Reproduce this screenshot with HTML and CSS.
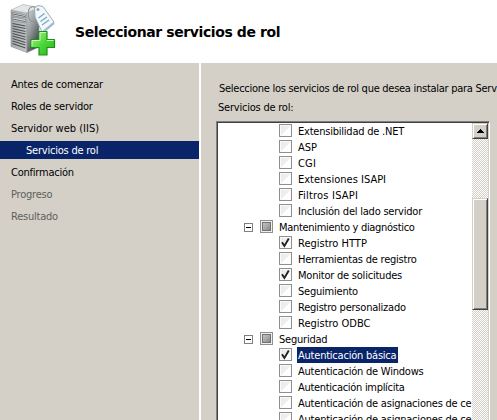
FILE: index.html
```html
<!DOCTYPE html>
<html lang="es">
<head>
<meta charset="utf-8">
<title>Seleccionar servicios de rol</title>
<link rel="stylesheet" href="styles.css">
</head>
<body>
<header class="header">
  <svg class="logo" width="50" height="54" viewBox="0 0 50 54">
    <defs>
      <linearGradient id="front" x1="0" y1="0" x2="1" y2="0"><stop offset="0" stop-color="#a4a8aa"/><stop offset="1" stop-color="#c3c7c8"/></linearGradient>
      <linearGradient id="side" x1="0" y1="0" x2=".6" y2="1"><stop offset="0" stop-color="#d6dadb"/><stop offset=".5" stop-color="#93989a"/><stop offset="1" stop-color="#3d4143"/></linearGradient>
      <linearGradient id="plus" x1="0" y1="0" x2="1" y2="1"><stop offset="0" stop-color="#b5f294"/><stop offset=".5" stop-color="#4fd83b"/><stop offset="1" stop-color="#25b51d"/></linearGradient>
    </defs>
    <path d="M1 7L17 10V49.500L1 43.500Z" fill="url(#front)" stroke="#8b9092" stroke-width=".6"/>
    <path d="M17 10L29 5V44L17 49.500Z" fill="url(#side)" stroke="#8b9092" stroke-width=".6"/>
    <path d="M1 7L13 1.500L29 4.500L17 10Z" fill="#e4e7e7" stroke="#a5aaac" stroke-width=".6"/>
    <path d="M2.500 9.500L15.500 12V15L2.500 12.500ZM2.500 14L15.500 16.500V20L2.500 17.500Z" fill="#dfe2e2" stroke="#6d7275" stroke-width=".6"/>
    <path d="M3 11L15 13.500M3 16L15 18.500" stroke="#55595b" stroke-width=".9"/>
    <path d="M2.500 20.500L15.500 23M2.500 23L15.500 25.500M2.500 25.500L15.500 28.500M2.500 28L15.500 31M2.500 30.500L15.500 34M2.500 33L15.500 36.500M2.500 35.500L15.500 39.500M2.500 38L15.500 42M2.500 40.500L15.500 45" stroke="#4c5154" stroke-width="1.200"/>
    <path d="M28 7C24 1 19 4 18.500 8C18 14 19 18 22.500 19C25 19 27 16 28 13" fill="none" stroke="#8e9598" stroke-width="1.100"/>
    <path d="M24.500 5L28 2.500L33 3.500L44 19L32 29L25 14Z" fill="#f1f7fb" stroke="#8ba7b9" stroke-width=".9"/>
    <path d="M44 19L32 29L33 30.500L44.500 21Z" fill="#9fbacb"/>
    <circle cx="28" cy="6.500" r="1.500" fill="#96a8b3"/>
    <path d="M28.500 15L34.500 10.500M30.500 18.500L37 14M32 22L39 17" stroke="#79a6c5" stroke-width="1.200"/>
    <path d="M29 28.500H37V36.500H44.500V44.500H37V52H29V44.500H21V36.500H29Z" fill="url(#plus)" stroke="#199316" stroke-width="1.200" stroke-linejoin="round"/>
    <path d="M30 37.500V29.500H36M22 43.500V37.500H30M37 37.500H43.500" fill="none" stroke="#caf7b8" stroke-width="1"/>
  </svg>
  <h1 class="title">Seleccionar servicios de rol</h1>
</header>
<div class="body">
  <nav class="steps">
    <div class="step"><span>Antes de comenzar</span></div>
    <div class="step"><span>Roles de servidor</span></div>
    <div class="step wide"><span>Servidor web (IIS)</span></div>
    <div class="step current"><span>Servicios de rol</span></div>
    <div class="step"><span>Confirmación</span></div>
    <div class="step pending"><span>Progreso</span></div>
    <div class="step pending"><span>Resultado</span></div>
  </nav>
  <main class="content">
    <p class="intro">Seleccione los servicios de rol que desea instalar para Serv</p>
    <p class="caption">Servicios de rol:</p>
    <div class="list">
      <div class="tree">
        <div class="row"><i class="box"></i><span class="label">Extensibilidad de .NET</span></div>
        <div class="row"><i class="box"></i><span class="label wide">ASP</span></div>
        <div class="row"><i class="box"></i><span class="label wider">CGI</span></div>
        <div class="row"><i class="box"></i><span class="label wide">Extensiones ISAPI</span></div>
        <div class="row"><i class="box"></i><span class="label wider">Filtros ISAPI</span></div>
        <div class="row"><i class="box"></i><span class="label">Inclusión del lado servidor</span></div>
        <div class="row group"><i class="toggle"></i><i class="box mixed"></i><span class="label tight">Mantenimiento y diagnóstico</span></div>
        <div class="row"><i class="box"><svg class="check" viewBox="0 0 11 11"><path d="M2 5.200L4.400 9L8.800 1.600"/></svg></i><span class="label wide">Registro HTTP</span></div>
        <div class="row"><i class="box"></i><span class="label">Herramientas de registro</span></div>
        <div class="row"><i class="box"><svg class="check" viewBox="0 0 11 11"><path d="M2 5.200L4.400 9L8.800 1.600"/></svg></i><span class="label">Monitor de solicitudes</span></div>
        <div class="row"><i class="box"></i><span class="label">Seguimiento</span></div>
        <div class="row"><i class="box"></i><span class="label">Registro personalizado</span></div>
        <div class="row"><i class="box"></i><span class="label wide">Registro ODBC</span></div>
        <div class="row group"><i class="toggle"></i><i class="box mixed"></i><span class="label">Seguridad</span></div>
        <div class="row"><i class="box"><svg class="check" viewBox="0 0 11 11"><path d="M2 5.200L4.400 9L8.800 1.600"/></svg></i><span class="label selected">Autenticación básica</span></div>
        <div class="row"><i class="box"></i><span class="label">Autenticación de Windows</span></div>
        <div class="row"><i class="box"></i><span class="label tight">Autenticación implícita</span></div>
        <div class="row"><i class="box"></i><span class="label">Autenticación de asignaciones de ce</span></div>
        <div class="row"><i class="box"></i><span class="label">Autenticación de asignaciones de ce</span></div>
      </div>
      <div class="scrollbar">
        <div class="arrow"><svg width="7" height="4" viewBox="0 0 7 4" shape-rendering="crispEdges"><path d="M3 0H4V1H5V2H6V3H7V4H0V3H1V2H2V1H3Z"/></svg></div>
        <div class="thumb"></div>
      </div>
    </div>
  </main>
</div>
</body>
</html>
```
FILE: styles.css
```css
* { box-sizing: border-box; }
body {
  margin: 0;
  width: 497px;
  height: 420px;
  overflow: hidden;
  display: flex;
  flex-direction: column;
  background: #fff;
  color: #000;
  font: 11px/16px "DejaVu Sans Condensed", "DejaVu Sans", sans-serif;
  font-stretch: condensed;
  letter-spacing: -0.22px;
  white-space: nowrap;
}
.header { display: flex; flex: none; height: 63px; padding: 3px 0 0 10px; }
.logo { flex: none; width: 50px; height: 54px; }
.title {
  margin: 18px 0 0 15px;
  font: bold 14px/22px "DejaVu Sans", sans-serif;
  letter-spacing: -0.4px;
}
.body { display: flex; flex: 1; min-height: 0; gap: 2px; }
.steps {
  flex: none;
  width: 199px;
  padding-top: 12px;
  display: flex;
  flex-direction: column;
  gap: 4px;
  background: #d4d0c8;
}
.step { height: 18px; line-height: 20px; padding-left: 11px; }
.current { padding-left: 26px; background: #0a246a; color: #fff; }
.pending { color: #615e59; }
.content {
  flex: 1;
  min-width: 0;
  display: flex;
  flex-direction: column;
  padding-left: 15px;
  background: #d4d0c8;
  overflow: hidden;
}
.intro { margin: 18px 0 0 3px; height: 16px; letter-spacing: -0.27px; }
.caption { margin: 3px 0 5px 2px; height: 16px; }
.list {
  display: flex;
  flex: 1;
  min-height: 0;
  width: 274px;
  padding: 1px 1px 0;
  background: #fff;
  border: solid;
  border-width: 1px 1px 0;
  border-color: #808080 #fff #808080 #808080;
  box-shadow: inset 1px 1px #404040, inset -1px 0 #d4d0c8;
}
.tree { width: 254px; overflow: hidden; }
.row { display: flex; height: 16px; padding-left: 61px; align-items: flex-start; }
.group { padding-left: 26px; }
.toggle {
  flex: none;
  width: 9px;
  height: 9px;
  margin: 4px 7px 0 0;
  border: 1px solid #808080;
  background: linear-gradient(#000, #000) center / 5px 1px no-repeat #fff;
}
.box {
  flex: none;
  width: 13px;
  height: 13px;
  margin-top: 1px;
  border: 1px solid #8e8f8f;
  background: linear-gradient(135deg, #e9e9e9, #f0f0f0 50%, #fff 56%) center / 9px 9px no-repeat #fafafa;
}
.mixed {
  border-color: #8e8f8f;
  background: linear-gradient(135deg, #cfcfcf, #808080) center / 9px 9px no-repeat #eee;
  box-shadow: inset 0 0 0 1px #eee, inset 0 0 0 2px #737373;
}
.check { display: block; width: 11px; height: 11px; fill: none; stroke: #222; stroke-width: 1.9; }
.label { padding: 0 2px 0 1px; margin-left: 5px; height: 16px; line-height: 18px; }
.tight { letter-spacing: -0.3px; }
.wide { letter-spacing: 0; }
.wider { letter-spacing: 0.2px; }
.selected { background: #0a246a; color: #fff; }
.scrollbar {
  width: 16px;
  flex: none;
  display: flex;
  flex-direction: column;
  background: repeating-conic-gradient(#fff 0 25%, #d4d0c8 0 50%) 0 0 / 2px 2px;
}
.arrow, .thumb {
  flex: none;
  background: #d4d0c8;
  border: 1px solid;
  border-color: #d4d0c8 #404040 #404040 #d4d0c8;
  box-shadow: inset 1px 1px #fff, inset -1px -1px #808080;
}
.arrow { height: 16px; display: flex; align-items: center; justify-content: center; }
.thumb { height: 112px; margin-top: 59px; }
```
